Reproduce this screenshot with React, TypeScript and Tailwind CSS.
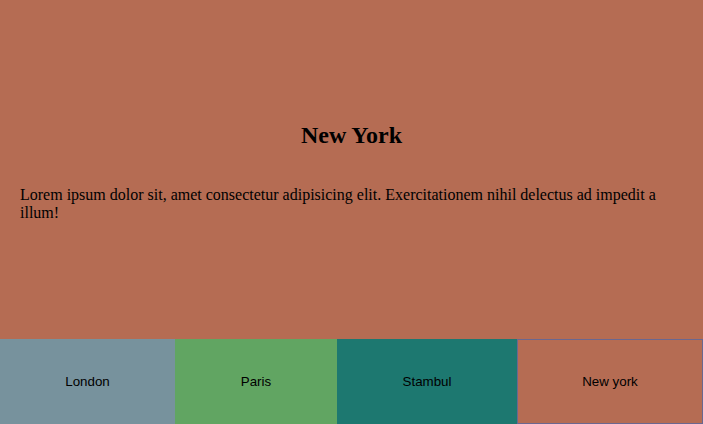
import React from "react";

export default function App() {
  const tabs = [
    { name: "London", w: "w-[175px]", bg: "bg-[#77929d]" },
    { name: "Paris", w: "w-[162px]", bg: "bg-[#61a562]" },
    { name: "Stambul", w: "w-[180px]", bg: "bg-[#1d7870]" },
    { name: "New york", w: "w-[186px]", bg: "bg-[#b56c53]" },
  ];
  return (
    <div className="w-[703px] h-[424px] flex flex-col bg-[#b56c53]">
      <div className="h-[339px] px-5 pt-[122px] text-black" style={{ fontFamily: '"Liberation Serif", serif' }}>
        <h2 className="text-[24px] leading-[normal] font-bold text-center">New York</h2>
        <p className="mt-[37px] text-[16px] leading-[normal]">
          Lorem ipsum dolor sit, amet consectetur adipisicing elit. Exercitationem nihil delectus ad impedit a illum!
        </p>
      </div>
      <div className="flex h-[85px]">
        {tabs.map((t, i) => (
          <div
            key={t.name}
            className={`${t.w} ${t.bg} h-full flex items-center justify-center text-[13.333px] text-black ${
              i === 3 ? "border border-[#6a6790]" : ""
            }`}
            style={{ fontFamily: '"Liberation Sans", Arial, sans-serif' }}
          >
            {t.name}
          </div>
        ))}
      </div>
    </div>
  );
}
